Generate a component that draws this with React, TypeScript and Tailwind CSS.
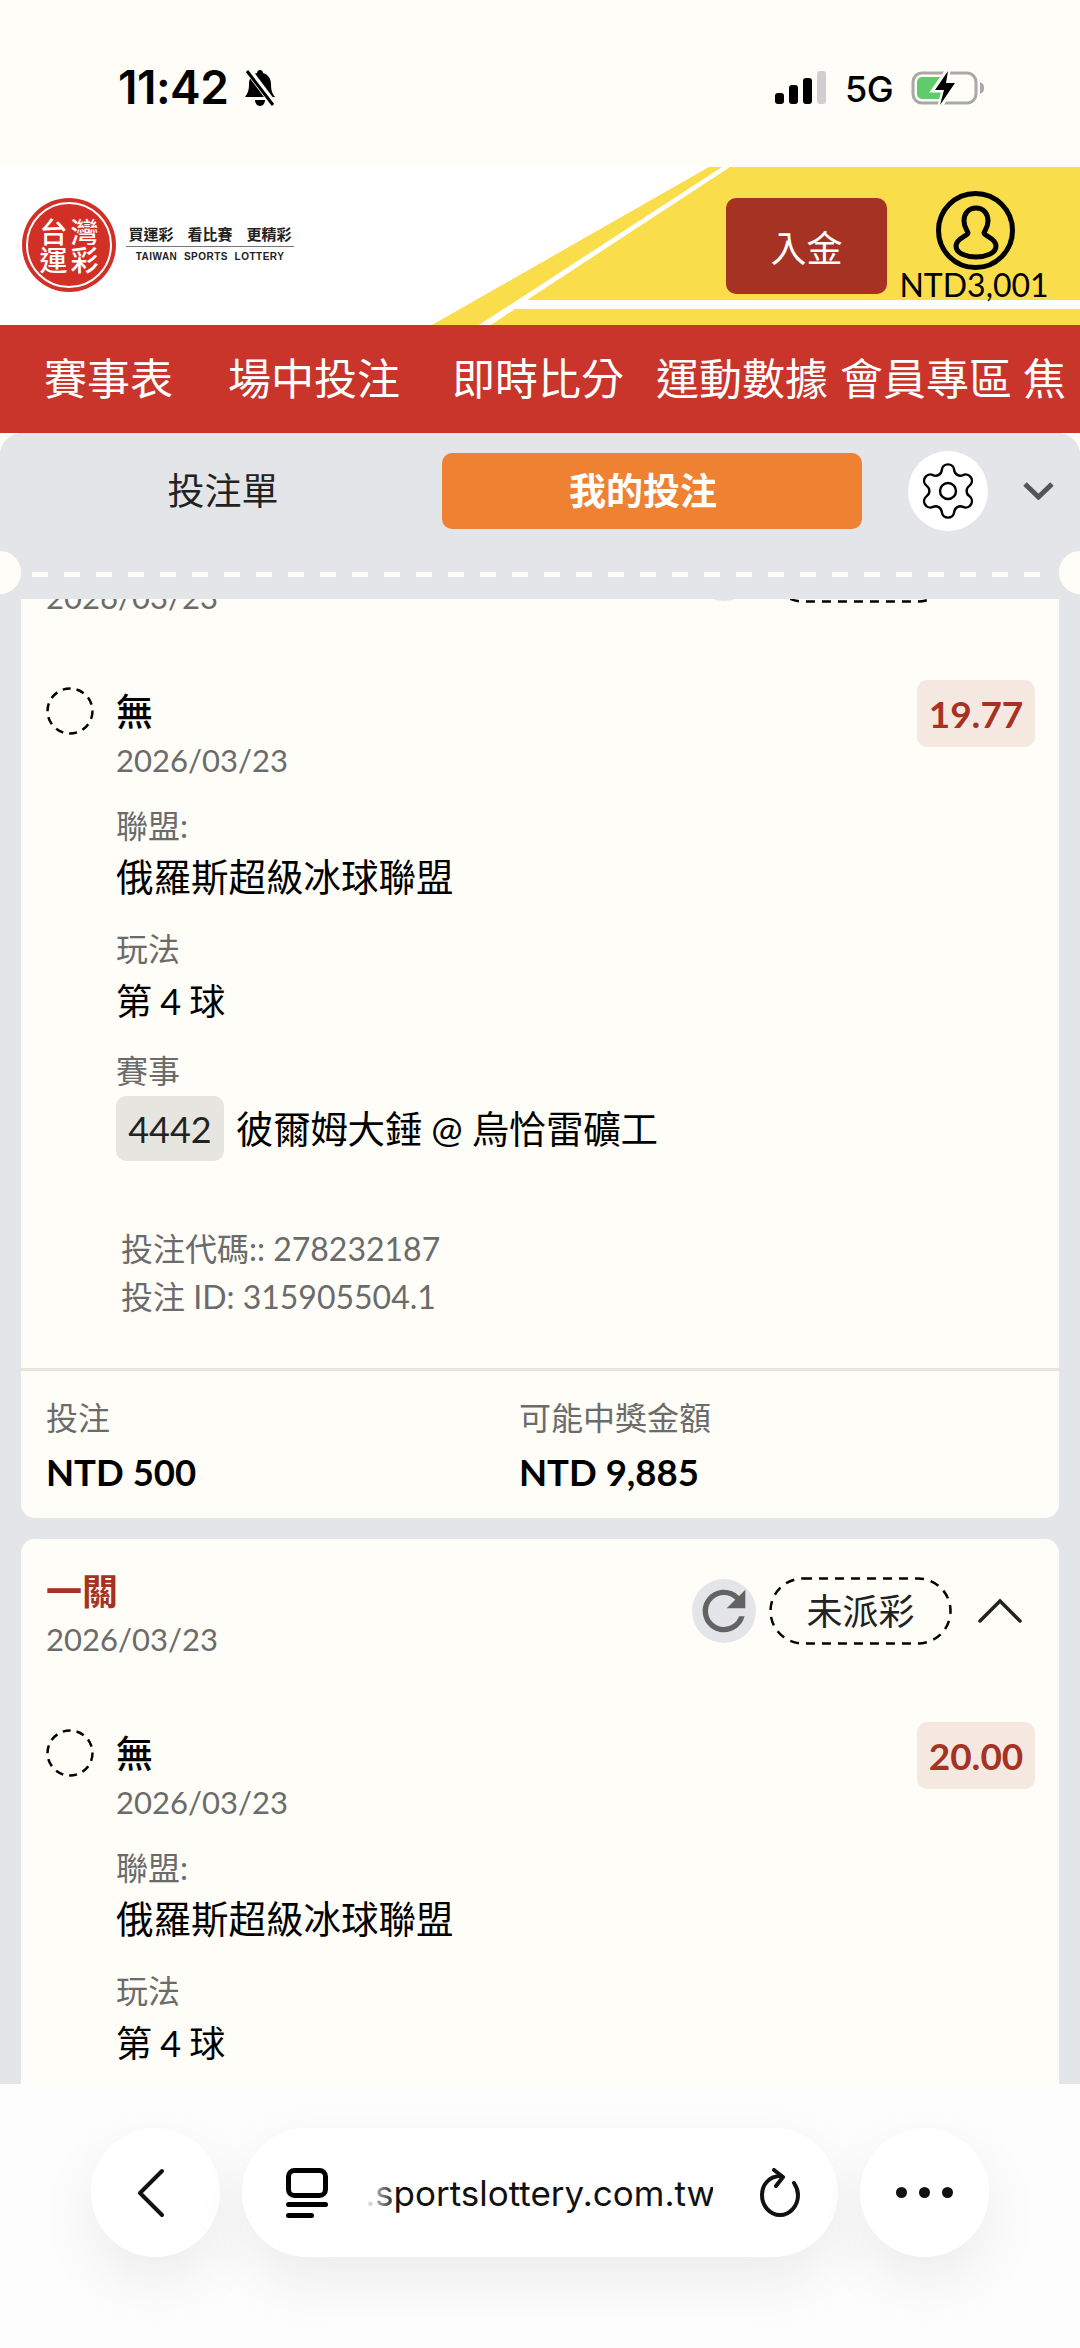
import { Settings } from "lucide-react";

function StatusBar() {
  return (
    <div className="h-[167px] bg-[#fffdf7] flex items-start font-['Inter',sans-serif] text-black">
      <div className="ml-[118px] mt-[60px] w-[112px] text-[46px] leading-[54px] font-semibold tracking-[-0.5px] whitespace-nowrap">11:42</div>
      <svg viewBox="0 0 38 38" className="w-[38px] h-[38px] ml-[11px] mt-[69px]">
        <path d="M19 1c-2 0-3 1.500-3 3-5 1.500-8 5.500-8 11 0 6-1 9-4 13h30c-3-4-4-7-4-13 0-5.500-3-9.500-8-11 0-1.500-1-3-3-3z" fill="#000" />
        <path d="M14 31h10c0 3-2 6-5 6s-5-3-5-6z" fill="#000" />
        <path d="M7 1l27 36" stroke="#fffdf7" strokeWidth="7" />
        <path d="M6 2l26 34" stroke="#000" strokeWidth="3" />
      </svg>
      <div className="ml-[496px] mt-[71px] flex items-end gap-[5px] h-[33px]">
        <div className="w-[9px] h-[11px] bg-black rounded-[3px]" />
        <div className="w-[9px] h-[19px] bg-black rounded-[3px]" />
        <div className="w-[9px] h-[26px] bg-black rounded-[3px]" />
        <div className="w-[9px] h-[33px] bg-[#cfcfcf] rounded-[3px]" />
      </div>
      <div className="ml-[19px] mt-[62px] text-[36px] leading-[54px] font-medium tracking-[-0.5px]">5G</div>
      <svg viewBox="0 0 74 36" className="w-[74px] h-[36px] ml-[18px] mt-[70px]">
        <rect x="2" y="3" width="63" height="30" rx="9" fill="none" stroke="#a8a8a8" strokeWidth="3" />
        <rect x="6" y="7" width="29" height="22" rx="5" fill="#5fcb6b" />
        <path d="M69 12c3 1 4 3 4 6s-1 5-4 6z" fill="#a8a8a8" />
        <path d="M37 0l-14 20h10l-4 16 16-23H35z" fill="#fffdf7" stroke="#fffdf7" strokeWidth="5" />
        <path d="M37 1L24 20h9l-4 15 15-22H35z" fill="#000" />
      </svg>
    </div>
  );
}

function Header() {
  return (
    <div className="relative h-[158px] bg-white flex">
      <svg viewBox="0 0 1080 158" className="absolute inset-0 w-[1080px] h-[158px]">
        <polygon points="709,0 722,0 479,158 432,158" fill="#f9dd4a" />
        <polygon points="730,0 1080,0 1080,133 527,133" fill="#f9dd4a" />
        <polygon points="515,142 1080,142 1080,158 491,158" fill="#f9dd4a" />
      </svg>
      <div className="relative ml-[22px] mt-[31px] w-[94px] h-[94px] rounded-full bg-[#d22f27] p-[4px]">
        <div className="w-full h-full rounded-full border-2 border-white grid grid-cols-2 place-content-center justify-items-center text-white font-medium text-[28px] leading-[28px] font-['Noto_Sans_CJK_TC',sans-serif] px-[10px]">
          <span>台</span>
          <span>灣</span>
          <span>運</span>
          <span>彩</span>
        </div>
      </div>
      <div className="relative ml-[10px] mt-[57px] w-[168px] flex flex-col items-center font-['Noto_Sans_CJK_TC',sans-serif] text-[#222]">
        <div className="flex gap-[14px] text-[15px] leading-[20px] font-bold">
          <span>買運彩</span>
          <span>看比賽</span>
          <span>更精彩</span>
        </div>
        <div className="w-full h-[1px] bg-[#777] mt-[2px]" />
        <div className="mt-[3px] text-[10px] leading-[14px] font-bold tracking-[0.5px] whitespace-pre font-['Liberation_Sans',sans-serif]">TAIWAN  SPORTS  LOTTERY</div>
      </div>
      <button className="relative ml-[432px] mt-[31px] w-[161px] h-[96px] bg-[#a63224] rounded-[10px] text-white text-[36px] font-['Noto_Sans_CJK_TC',sans-serif]">入金</button>
      <div className="absolute right-[33px] top-[24px] w-[146px] flex flex-col items-center">
        <svg viewBox="0 0 79 79" className="w-[79px] h-[79px] ml-[2px]">
          <circle cx="39.500" cy="39.500" r="37" fill="none" stroke="#000" strokeWidth="5" />
          <path d="M40 17C32 17 28 23 28 30C28 36 31 39 32 42C32 45 20 47 20 55C20 63 32 66 40 66C48 66 60 63 60 55C60 47 48 45 48 42C49 39 52 36 52 30C52 23 48 17 40 17Z" fill="none" stroke="#000" strokeWidth="5" />
        </svg>
        <div className="text-[32px] leading-[36px] mt-[-3px] text-black whitespace-nowrap">NTD3,001</div>
      </div>
    </div>
  );
}

function Nav() {
  return (
    <div className="h-[108px] bg-[#c9352b] text-white text-[43px] leading-[108px] flex whitespace-nowrap overflow-hidden pl-[44px]">
      <span>賽事表</span>
      <span className="ml-[55px]">場中投注</span>
      <span className="ml-[52px]">即時比分</span>
      <span className="ml-[32px]">運動數據</span>
      <span className="ml-[12px]">會員專區</span>
      <span className="ml-[11px]">焦</span>
    </div>
  );
}

function PanelHead() {
  return (
    <div className="relative z-10 h-[166px] bg-[#e3e5e8] rounded-t-[22px]">
      <div className="flex items-center pl-[13px] pt-[18px]">
        <div className="w-[420px] text-center text-[37px] text-[#222]">投注單</div>
        <div className="ml-[9px] w-[420px] h-[76px] pr-[18px] rounded-[10px] bg-[#ef8133] text-white text-[37px] font-bold flex items-center justify-center">我的投注</div>
        <div className="ml-[46px] w-[80px] h-[80px] rounded-full bg-white flex items-center justify-center">
          <Settings className="w-[64px] h-[64px] text-black" strokeWidth={0.9} />
        </div>
        <svg viewBox="0 0 31 18" className="ml-[35px] w-[31px] h-[18px]">
          <path d="M2 2l13.500 13L29 2" fill="none" stroke="#555" strokeWidth="5" />
        </svg>
      </div>
      <div className="absolute left-[32px] right-[32px] top-[139px] h-[5px] bg-[repeating-linear-gradient(90deg,#fffdf7_0_16px,transparent_16px_32px)]" />
      <div className="absolute left-[-21px] top-[118px] w-[42px] h-[43px] rounded-full bg-[#fffdf7]" />
      <div className="absolute right-[-21px] top-[118px] w-[42px] h-[43px] rounded-full bg-[#fffdf7]" />
    </div>
  );
}

function Label({ children }: { children: React.ReactNode }) {
  return <div className="text-[32px] leading-[46px] text-[#6b6b6b]">{children}</div>;
}

function BetCard({ odds }: { odds: string }) {
  return (
    <div className="bg-[#fffdf7] rounded-[14px] pt-[28px] text-black">
      <div className="px-[25px] flex items-start h-[96px]">
        <div>
          <div className="text-[36px] leading-[48px] font-bold text-[#a63224]">一關</div>
          <div className="text-[31px] leading-[48px] text-[#6b6b6b]">2026/03/23</div>
        </div>
        <div className="ml-auto flex items-center mt-[10px]">
          <div className="w-[64px] h-[64px] rounded-full bg-[#e3e5e8]">
            <svg viewBox="0 0 24 24" className="w-[64px] h-[64px]">
              <path fill="#636363" d="M17.650 6.350A7.958 7.958 0 0 0 12 4c-4.420 0-7.990 3.580-7.990 8s3.570 8 7.990 8c3.730 0 6.840-2.550 7.730-6h-2.080A5.990 5.990 0 0 1 12 18c-3.310 0-6-2.690-6-6s2.690-6 6-6c1.660 0 3.140.690 4.220 1.780L13 11h7V4l-2.350 2.350z" />
            </svg>
          </div>
          <div className="relative ml-[13px] w-[183px] h-[68px] flex items-center justify-center text-[36px] text-[#222]">
            <svg viewBox="0 0 183 68" className="absolute inset-0 w-[183px] h-[68px]">
              <rect x="1.500" y="1.500" width="180" height="65" rx="32.500" fill="none" stroke="#000" strokeWidth="2.500" strokeDasharray="9 7" />
            </svg>
            未派彩
          </div>
          <svg viewBox="0 0 44 26" className="ml-[26px] mr-[12px] w-[44px] h-[26px]">
            <path d="M2 23L22 3l20 20" fill="none" stroke="#222" strokeWidth="3.500" strokeLinecap="round" />
          </svg>
        </div>
      </div>
      <div className="mt-[66px] pl-[25px] pr-[24px] flex items-start">
        <svg viewBox="0 0 48 48" className="w-[48px] h-[48px]">
          <circle cx="24" cy="24" r="22.500" fill="none" stroke="#000" strokeWidth="2.500" strokeDasharray="8 6" />
        </svg>
        <div className="ml-[22px]">
          <div className="text-[37px] leading-[50px] font-medium text-black">無</div>
          <div className="text-[31px] leading-[46px] text-[#6b6b6b]">2026/03/23</div>
        </div>
        <div className="ml-auto mt-[-7px] w-[118px] h-[67px] rounded-[10px] bg-[#f5e8e1] flex items-center justify-center text-[37px] font-bold text-[#a63224]">{odds}</div>
      </div>
      <div className="pl-[95px]">
        <div className="mt-[20px]"><Label>聯盟:</Label></div>
        <div className="mt-[3px] text-[37.500px] leading-[50px]">俄羅斯超級冰球聯盟</div>
        <div className="mt-[24px]"><Label>玩法</Label></div>
        <div className="mt-[4px] text-[36px] leading-[50px] tracking-[-0.5px] whitespace-pre">第 4 球</div>
        <div className="mt-[22px]"><Label>賽事</Label></div>
        <div className="mt-[2px] flex items-center">
          <div className="w-[108px] h-[65px] rounded-[10px] bg-[#e6e5e0] flex items-center justify-center text-[36px] text-[#222]">4442</div>
          <div className="ml-[12px] text-[37.500px] leading-[50px] tracking-[-0.3px]">彼爾姆大錘 @ 烏恰雷礦工</div>
        </div>
      </div>
      <div className="mt-[64px] pl-[100px] text-[32px] leading-[48px] text-[#6b6b6b]">
        <div>投注代碼:: 278232187</div>
        <div>投注 ID: 315905504.1</div>
      </div>
      <div className="mt-[47px] h-[3px] bg-[#e8e5de]" />
      <div className="px-[25px] pt-[24px] pb-[19px] flex">
        <div className="w-[473px]">
          <Label>投注</Label>
          <div className="mt-[4px] text-[36.500px] leading-[54px] font-bold">NTD 500</div>
        </div>
        <div>
          <Label>可能中獎金額</Label>
          <div className="mt-[4px] text-[36.500px] leading-[54px] font-bold">NTD 9,885</div>
        </div>
      </div>
    </div>
  );
}

function BottomBar() {
  return (
    <div className="relative z-20 h-[264px] bg-[#fdfdfd] pt-[44px] pl-[91px] flex items-start gap-[22px]">
      <div className="w-[129px] h-[129px] rounded-full bg-white shadow-[0_24px_60px_rgba(0,0,0,0.07)] flex items-center justify-center">
        <svg viewBox="0 0 30 50" className="w-[30px] h-[50px] mr-[10px]">
          <path d="M26 3L4 25l22 22" fill="none" stroke="#111" strokeWidth="4" strokeLinecap="round" strokeLinejoin="round" />
        </svg>
      </div>
      <div className="w-[596px] h-[129px] rounded-full bg-white shadow-[0_24px_60px_rgba(0,0,0,0.07)] flex items-center pl-[44px]">
        <svg viewBox="0 0 42 50" className="w-[42px] h-[50px]">
          <rect x="2.500" y="2.500" width="37" height="25" rx="6" fill="none" stroke="#000" strokeWidth="5" />
          <rect x="0" y="34" width="42" height="5" rx="2.500" fill="#000" />
          <rect x="0" y="45" width="28" height="5" rx="2.500" fill="#000" />
        </svg>
        <div className="relative ml-[37px] w-[348px] text-[35px] leading-[44px] text-[#111] font-['Inter',sans-serif] overflow-hidden whitespace-nowrap text-right">
          .sportslottery.com.tw
          <div className="absolute left-0 top-0 w-[32px] h-full bg-gradient-to-r from-white to-transparent" />
        </div>
        <svg viewBox="0 0 42 50" className="ml-[46px] w-[42px] h-[50px]">
          <path d="M22 8C10 8 3 17 3 27c0 11 8 20 18 20s18-9 18-20c0-5-2-9-4-12" fill="none" stroke="#111" strokeWidth="4" strokeLinecap="round" />
          <path d="M15 2l9 7-7 9" fill="none" stroke="#111" strokeWidth="4" strokeLinecap="round" strokeLinejoin="round" />
        </svg>
      </div>
      <div className="w-[129px] h-[129px] rounded-full bg-white shadow-[0_24px_60px_rgba(0,0,0,0.07)] flex items-center justify-center gap-[12px]">
        <div className="w-[11px] h-[11px] rounded-full bg-[#111]" />
        <div className="w-[11px] h-[11px] rounded-full bg-[#111]" />
        <div className="w-[11px] h-[11px] rounded-full bg-[#111]" />
      </div>
    </div>
  );
}

export default function App() {
  return (
    <div className="w-[1080px] h-[2348px] overflow-hidden flex flex-col bg-[#fffdf7] font-['Lato','Noto_Sans_CJK_TC',sans-serif]">
      <StatusBar />
      <Header />
      <Nav />
      <div className="flex-1 min-h-0 overflow-hidden relative bg-[#e3e5e8] rounded-t-[22px]">
        <PanelHead />
        <div className="relative z-0 mt-[-102px] px-[21px] flex flex-col gap-[21px]">
          <BetCard odds="19.77" />
          <BetCard odds="20.00" />
        </div>
      </div>
      <BottomBar />
    </div>
  );
}
